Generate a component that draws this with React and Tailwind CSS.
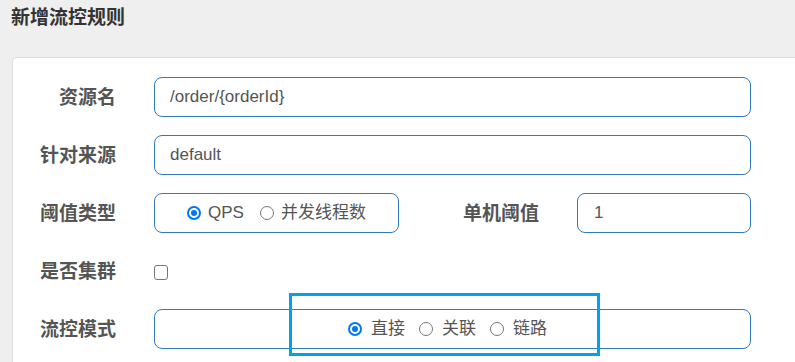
const font = { fontFamily: '"Liberation Sans", "Noto Sans CJK SC", sans-serif' };

function Radio({ checked, label, gap = 'gap-[7px]' }) {
  return (
    <label className={`flex items-center ${gap}`}>
      {checked ? (
        <span className="w-[14px] h-[14px] rounded-full bg-[#0075ff] flex items-center justify-center">
          <span className="w-[10px] h-[10px] rounded-full border-2 border-white bg-[#0075ff]" />
        </span>
      ) : (
        <span className="w-[14px] h-[14px] rounded-full border border-[#767676] bg-white" />
      )}
      <span>{label}</span>
    </label>
  );
}

function Label({ children, className = '' }) {
  return (
    <div className={`text-right font-bold text-[19px] text-[#555] shrink-0 ${className}`}>
      {children}
    </div>
  );
}

const box = 'h-[40px] border border-[#2f7abf] rounded-[8px] bg-white text-[17px] text-[#555]';

export default function App() {
  return (
    <div className="w-[795px] h-[362px] bg-[#efefef] overflow-hidden relative" style={font}>
      {/* Header */}
      <div className="h-[57px] pl-[11px] pt-[5px]">
        <h1 className="text-[19px] font-bold text-[#333] leading-[26px]">新增流控规则</h1>
      </div>

      {/* Card */}
      <div className="ml-[12px] w-[820px] bg-white border border-[#ddd] rounded-[5px] pt-[19px] pb-6">
        <div className="flex flex-col gap-[18px] w-[738px]">
          <div className="flex items-center">
            <Label className="w-[103px] mt-[2px]">资源名</Label>
            <div className={`ml-[38px] flex-1 flex items-center px-[15px] ${box}`}>/order/{'{orderId}'}</div>
          </div>

          <div className="flex items-center">
            <Label className="w-[103px] mt-[2px]">针对来源</Label>
            <div className={`ml-[38px] flex-1 flex items-center px-[15px] ${box}`}>default</div>
          </div>

          <div className="flex items-center">
            <Label className="w-[103px] mt-[2px]">阈值类型</Label>
            <div className={`ml-[38px] w-[245px] flex items-center justify-center gap-[16px] ${box}`}>
              <Radio checked label="QPS" />
              <Radio label="并发线程数" />
            </div>
            <Label className="w-[140px] mt-[2px]">单机阈值</Label>
            <div className={`ml-[38px] flex-1 flex items-center px-[16px] ${box}`}>1</div>
          </div>

          <div className="flex items-center h-[40px]">
            <Label className="w-[103px] mt-[2px]">是否集群</Label>
            <div className="ml-[38px] w-[14px] h-[15px] border border-[#767676] rounded-[3px] bg-white mt-[3px]" />
          </div>

          <div className="flex items-center">
            <Label className="w-[103px] mt-[2px]">流控模式</Label>
            <div className={`ml-[38px] flex-1 flex items-center justify-center gap-[14px] pr-[10px] ${box}`}>
              <Radio checked label="直接" gap="gap-[9px]" />
              <Radio label="关联" gap="gap-[9px]" />
              <Radio label="链路" gap="gap-[9px]" />
            </div>
          </div>
        </div>
      </div>

      {/* highlight overlay */}
      <div className="absolute left-[289px] top-[293px] w-[311px] h-[63px] border-[3px] border-[#00a2e8]" />
    </div>
  );
}
